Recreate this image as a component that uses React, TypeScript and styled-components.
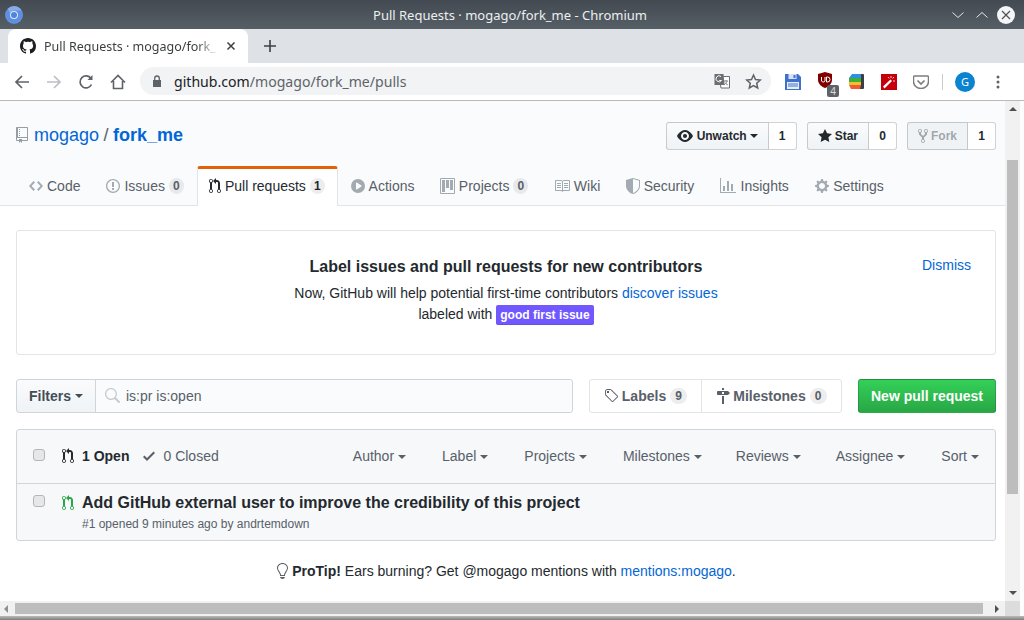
import React from "react";
import styled, { createGlobalStyle } from "styled-components";

const Global = createGlobalStyle`
  html, body { margin: 0; padding: 0; width: 1024px; height: 620px; overflow: hidden; background: #fff; }
  * { box-sizing: border-box; }
  #root { width: 1024px; height: 620px; }
`;

const GH = `"Liberation Sans", Arial, sans-serif`;
const UI = `"Noto Sans", "Open Sans", sans-serif`;

const Win = styled.div`display: flex; flex-direction: column; width: 1024px; height: 620px; font-family: ${GH}; color: #24292e; overflow: hidden;`;
const TitleBar = styled.div`
  height: 29px; flex: none; display: grid; grid-template-columns: 1fr auto 1fr; align-items: center;
  background: linear-gradient(#434a51, #565e66); color: #eceff1; font: 13px ${UI}; padding: 0 9px 0 5px;
`;
const WinTitle = styled.div``;
const LogoBox = styled.div`height: 18px;`;
const TitleRight = styled.div`display: flex; justify-content: flex-end; align-items: center; gap: 8px; svg:last-child { margin-left: -1px; }`;
const TabStrip = styled.div`height: 34px; flex: none; background: #dee1e6; display: flex; align-items: flex-end; padding-left: 8px;`;
const Tab = styled.div`
  width: 240px; height: 34px; background: #fff; border-radius: 8px 8px 0 0; display: flex; align-items: center; padding: 0 11px 0 12px; gap: 8px;
  font: 12.5px ${UI}; color: #3c4043;
`;
const TabTitle = styled.div`
  width: 174px; flex: none; white-space: nowrap;
  -webkit-mask-image: linear-gradient(90deg, #000 88%, transparent 100%); mask-image: linear-gradient(90deg, #000 88%, transparent 100%);
`;
const NewTab = styled.div`height: 34px; display: flex; align-items: center; margin-left: 16px;`;
const Toolbar = styled.div`height: 38px; flex: none; background: #fff; border-bottom: 1px solid #b9b9b9; display: flex; align-items: center; padding: 0 0 0 14px;`;
const NavBtn = styled.div<{ $w?: number }>`width: ${(p) => p.$w ?? 32}px; flex: none; display: flex; align-items: center; justify-content: flex-end;`;
const NavGroup = styled.div`display: flex; margin-right: 14px;`;
const Omni = styled.div`
  width: 631px; height: 28px; border-radius: 14px; background: #f1f3f4; display: flex; align-items: center; padding: 0 9px 0 12px;
  font: 14.1px ${UI}; color: #5f6368; margin-bottom: 1px; flex: none;
`;
const Url = styled.div`flex: 1; margin-left: 12px; white-space: nowrap; b { font-weight: 400; color: #202124; }`;
const OmniIcons = styled.div`display: flex; align-items: center; gap: 15px;`;
const Extensions = styled.div`display: flex; align-items: center; margin-left: 6px; height: 28px;`;
const Ext = styled.div`width: 32px; height: 28px; display: flex; align-items: center; justify-content: center; position: relative;`;
const StackExt = styled(Ext)`padding-right: 1px;`;
const Badge = styled.span`
  position: absolute; right: 2px; bottom: -1px; width: 12px; height: 12px; background: #5f6368; color: #ddd; border-radius: 2px;
  font: 10px/12px ${UI}; text-align: center;
`;
const Sep = styled.div`width: 1px; height: 16px; background: #c8cacd; margin: 0 6px 0 5px;`;
const Avatar = styled.div`width: 20px; height: 20px; border-radius: 50%; background: #0a84d0; color: #fff; font: 11px/20px ${UI}; text-align: center; margin: 0 21px 0 6px;`;

const Lower = styled.div`flex: 1; min-height: 0; display: flex; flex-direction: column; padding-right: 4px; background: #fdfdfd;`;
const Body = styled.div`flex: 1; min-height: 0; display: flex;`;
const Page = styled.div`flex: 1; min-width: 0; display: flex; flex-direction: column; background: #fff;`;
const VBar = styled.div`width: 15px; flex: none; background: #f1f1f1; display: flex; flex-direction: column; align-items: center;`;
const VThumb = styled.div`width: 11px; height: 334px; background: #bdbdbd; margin-top: 49px; flex: none;`;
const VArrow = styled.div<{ $down?: boolean }>`
  width: 0; height: 0; border-left: 4px solid transparent; border-right: 4px solid transparent; flex: none;
  ${(p) => (p.$down ? "border-top: 4px solid #505050; margin-top: 97px;" : "border-bottom: 4px solid #505050; margin-top: 6px;")}
`;
const HBarRow = styled.div`height: 15px; flex: none; background: #f1f1f1; display: flex; align-items: center;`;
const HThumb = styled.div`width: 968px; height: 11px; background: #bdbdbd; margin-left: 7px;`;
const HArrow = styled.div<{ $right?: boolean }>`
  width: 0; height: 0; border-top: 4px solid transparent; border-bottom: 4px solid transparent; margin-left: 4px;
  ${(p) => (p.$right ? "border-left: 4px solid #505050; margin-left: 12px;" : "border-right: 4px solid #909090;")}
`;
const Corner = styled.div`width: 15px; height: 15px; background: #dcdcdc; margin-left: auto;`;
const WinBottom = styled.div`height: 4px; flex: none; background: linear-gradient(#bbb, #7d7d7d);`;

const Head = styled.div`height: 105px; flex: none; background: #fafbfc; border-bottom: 1px solid #e1e4e8; display: flex; flex-direction: column; padding: 21px 9px 0 16px;`;
const HeadTop = styled.div`display: flex; justify-content: space-between; align-items: flex-start; height: 44px; flex: none;`;
const RepoTitle = styled.h1`margin: 0; font-size: 18px; font-weight: 400; line-height: 26px; display: flex; align-items: center; color: #586069; svg { margin-right: 6px; }`;
const Link = styled.a`color: #0366d6; text-decoration: none;`;
const StrongLink = styled(Link)`font-weight: 700;`;
const Slash = styled.span`margin: 0 4.5px;`;
const Actions = styled.div`display: flex; gap: 10px;`;
const BtnGroup = styled.div`display: flex; height: 28px; font-size: 12px; font-weight: 700;`;
const Caret = styled.span`display: inline-block; width: 0; height: 0; border-left: 4px solid transparent; border-right: 4px solid transparent; border-top: 4px solid currentColor; margin-left: 4px; vertical-align: middle;`;
const GBtn = styled.div<{ $off?: boolean }>`
  display: flex; align-items: center; gap: 3px; padding: 0 10px; border: 1px solid rgba(27,31,35,.2); border-radius: 3px 0 0 3px;
  background: linear-gradient(#fafbfc, #eff3f6); color: ${(p) => (p.$off ? "rgba(36,41,46,.4)" : "#24292e")};
  ${(p) => p.$off && "background: #eff3f6;"}
  ${Caret} { margin-left: 0; }
`;
const EyeLabel = styled.span`margin-left: 1px;`;
const Count = styled.div`
  display: flex; align-items: center; justify-content: center; width: 28px; border: 1px solid rgba(27,31,35,.2); border-left: 0; border-radius: 0 3px 3px 0; background: #fff; color: #24292e;
`;
const Tabs = styled.nav`display: flex; height: 40px; font-size: 14px; align-items: stretch; flex: none;`;
const TabItem = styled.div<{ $on?: boolean }>`
  display: flex; align-items: center; gap: 4px; padding: 0 13px; color: ${(p) => (p.$on ? "#24292e" : "#586069")}; white-space: nowrap; height: 40px;
  svg { fill: ${(p) => (p.$on ? "#24292e" : "#a3aab1")}; }
  ${(p) => p.$on && "background: #fff; border: 1px solid #e1e4e8; border-top: 3px solid #e36209; border-bottom: 0; border-radius: 3px 3px 0 0; padding: 0 12px 3px 11px;"}
`;
const LaterTab = styled(TabItem)`padding-left: 12.7px; padding-right: 12.7px;`;
const InsightsTab = styled(LaterTab)`gap: 5px;`;
const SettingsTab = styled(LaterTab)`margin-left: 1px;`;
const Counter = styled.span`
  display: inline-block; min-width: 17px; padding: 2px 5px; font-size: 12px; font-weight: 700; line-height: 1; color: #586069; background: rgba(27,31,35,.08); border-radius: 20px; text-align: center;
`;
const TabCounter = styled(Counter)`min-width: 15px; padding: 2px 4px;`;
const ActiveCounter = styled(TabCounter)`color: #24292e;`;

const Main = styled.div`flex: 1; padding: 24px 9px 0 16px; display: flex; flex-direction: column; min-height: 0;`;
const Notice = styled.div`height: 125px; flex: none; border: 1px solid #e1e4e8; border-radius: 3px; display: grid; grid-template-columns: 1fr auto 1fr; padding-top: 25px; text-align: center;`;
const NoticeBody = styled.div`font-size: 14px; line-height: 21px;`;
const NoticeTitle = styled.h3`margin: 0 0 5px; font-size: 16px; line-height: 22px; font-weight: 700; color: #24292e;`;
const Dismiss = styled(Link)`justify-self: end; font-size: 14px; line-height: 20px; margin-right: 24px; margin-top: -1px;`;
const GoodLabel = styled.span`display: inline-block; background: #7057ff; color: #fff; font-size: 12px; font-weight: 700; line-height: 20px; height: 20px; padding: 0 4px; border-radius: 2px; vertical-align: middle; box-shadow: inset 0 -1px 0 rgba(27,31,35,.12);`;
const FilterRow = styled.div`display: flex; margin-top: 24px; height: 34px; flex: none;`;
const FiltersBtn = styled.div`
  width: 80px; display: flex; align-items: center; justify-content: center; font-size: 14px; font-weight: 700; border: 1px solid #d1d5da; border-radius: 3px 0 0 3px;
  background: linear-gradient(#fafbfc, #eff3f6); color: #444d56;
`;
const SearchInput = styled.div`
  width: 478px; margin-left: -1px; display: flex; align-items: center; gap: 6px; padding-left: 8px; font-size: 14px; color: #586069; background: #fafbfc; border: 1px solid #d1d5da; border-radius: 0 3px 3px 0;
`;
const NavPair = styled.div`display: flex; margin-left: 16px; border: 1px solid #e1e4e8; border-radius: 3px; width: 253px;`;
const NavLink = styled.div<{ $w: number }>`
  width: ${(p) => p.$w}px; display: flex; align-items: center; justify-content: center; gap: 3px; font-size: 14px; font-weight: 700; color: #586069;
  & + & { border-left: 1px solid #e1e4e8; }
  svg { fill: #586069; }
  ${Counter} { margin-left: 1px; }
`;
const GreenBtn = styled.div`
  width: 138px; margin-left: 16px; display: flex; align-items: center; justify-content: center; color: #fff; font-size: 14px; font-weight: 700; border: 1px solid rgba(27,31,35,.2); border-radius: 3px;
  background: linear-gradient(#34d058, #28a745);
`;
const Table = styled.div`margin-top: 16px; height: 112px; flex: none; border: 1px solid #d1d5da; border-radius: 3px; background: #f6f8fa; display: flex; flex-direction: column;`;
const TableHead = styled.div`height: 54px; flex: none; border-bottom: 1px solid #d1d5da; display: flex; align-items: center; padding: 0 16px 2px; font-size: 14px; color: #586069;`;
const Check = styled.span`display: block; width: 12px; height: 12px; flex: none; background: #e6e7e8; border: 1px solid #b4b6b8; border-radius: 3px; margin-top: -2px;`;
const OpenLabel = styled.span`display: flex; align-items: center; font-weight: 700; color: #24292e; gap: 8px; margin-left: 17px;`;
const ClosedLabel = styled.span`display: flex; align-items: center; gap: 8px; margin-left: 14px; svg { fill: #586069; }`;
const Sorts = styled.div`margin-left: auto; display: flex; gap: 36px;`;
const SortItem = styled.span`
  white-space: nowrap;
  &:nth-child(4) { margin-right: -2px; }
  &:nth-child(5) { margin-right: -1px; }
`;
const Row = styled.div`display: flex; padding: 8px 16px 0;`;
const RowCheck = styled(Check)`margin-top: 3px;`;
const RowIcon = styled.div`margin-left: 17px; margin-right: 8px; margin-top: 3px; height: 16px;`;
const RowTitle = styled.div`font-size: 16px; font-weight: 700; line-height: 22px; color: #24292e;`;
const RowMeta = styled.div`font-size: 12px; line-height: 18px; color: #586069; margin-top: 1px;`;
const ProTip = styled.div`flex: none; margin-top: 20px; display: flex; justify-content: center; align-items: center; gap: 4px; font-size: 14px; line-height: 20px; color: #24292e; white-space: pre; svg { fill: #586069; }`;

const Oct = ({ w, d, fill }: { w: number; d: string; fill?: string }) => (
  <svg width={w} height={16} viewBox={`0 0 ${w} 16`} fill={fill} style={{ flex: "none" }}>
    <path fillRule="evenodd" d={d} />
  </svg>
);

const P = {
  repo: "M4 9H3V8h1v1zm0-3H3v1h1V6zm0-2H3v1h1V4zm0-2H3v1h1V2zm8-1v12c0 .55-.45 1-1 1H6v2l-1.5-1.5L3 16v-2H1c-.55 0-1-.45-1-1V1c0-.55.45-1 1-1h10c.55 0 1 .45 1 1zm-1 10H1v2h2v-1h3v1h5v-2zm0-10H2v9h9V1z",
  code: "M9.5 3L8 4.5 11.5 8 8 11.5 9.5 13 14 8 9.5 3zm-5 0L0 8l4.5 5L6 11.5 2.5 8 6 4.5 4.5 3z",
  issue: "M7 2.3c3.14 0 5.7 2.56 5.7 5.7s-2.56 5.7-5.7 5.7A5.71 5.71 0 0 1 1.3 8c0-3.14 2.56-5.7 5.7-5.7zM7 1C3.14 1 0 4.14 0 8s3.14 7 7 7 7-3.14 7-7-3.14-7-7-7zm1 3H6v5h2V4zm0 6H6v2h2v-2z",
  pr: "M11 11.28V5c-.03-.78-.34-1.47-.94-2.06C9.46 2.35 8.78 2.03 8 2H7V0L4 3l3 3V4h1c.27.02.48.11.69.31.21.2.3.42.31.69v6.28A1.993 1.993 0 0 0 10 15a1.993 1.993 0 0 0 1-3.72zm-1 2.92c-.66 0-1.2-.55-1.2-1.2 0-.65.55-1.2 1.2-1.2.65 0 1.2.55 1.2 1.2 0 .65-.55 1.2-1.2 1.2zM4 3c0-1.11-.89-2-2-2a1.993 1.993 0 0 0-1 3.72v6.56A1.993 1.993 0 0 0 2 15a1.993 1.993 0 0 0 1-3.72V4.72c.59-.34 1-.98 1-1.72zm-.8 10c0 .66-.55 1.2-1.2 1.2-.65 0-1.2-.55-1.2-1.2 0-.65.55-1.2 1.2-1.2.65 0 1.2.55 1.2 1.2zM2 4.2C1.34 4.2.8 3.65.8 3c0-.65.55-1.2 1.2-1.2.65 0 1.2.55 1.2 1.2 0 .65-.55 1.2-1.2 1.2z",
  play: "M14 8A7 7 0 1 1 0 8a7 7 0 0 1 14 0zm-8.223 3.482l4.599-3.066a.5.5 0 0 0 0-.832L5.777 4.518A.5.5 0 0 0 5 4.934v6.132a.5.5 0 0 0 .777.416z",
  project: "M10 12h3V2h-3v10zm-4-2h3V2H6v8zm-4 4h3V2H2v12zm-1 1h13V1H1v14zM14 0H1a1 1 0 0 0-1 1v14a1 1 0 0 0 1 1h13a1 1 0 0 0 1-1V1a1 1 0 0 0-1-1z",
  book: "M3 5h4v1H3V5zm0 3h4V7H3v1zm0 2h4V9H3v1zm11-5h-4v1h4V5zm0 2h-4v1h4V7zm0 2h-4v1h4V9zm2-6v9c0 .55-.45 1-1 1H9.5l-1 1-1-1H2c-.55 0-1-.45-1-1V3c0-.55.45-1 1-1h5.5l1 1 1-1H15c.55 0 1 .45 1 1zm-8 .5L7.5 3H2v9h6V3.5zm7-.5H9.5l-.5.5V12h6V3z",
  shield: "M7 0L0 2v6.02C0 12.69 5.31 16 7 16c1.69 0 7-3.31 7-7.98V2L7 0zm0 1.04l6 1.71v5.27c0 2.02-1.18 3.8-2.6 5.08C9.02 14.35 7.6 15 7 15V1.04z",
  graph: "M16 14v1H0V0h1v14h15zM5 13H3V8h2v5zm4 0H7V3h2v10zm4 0h-2V6h2v7z",
  gear: "M14 8.77v-1.6l-1.94-.64-.45-1.09.88-1.84-1.13-1.13-1.81.91-1.09-.45-.69-1.92h-1.6l-.63 1.94-1.11.45-1.84-.88-1.13 1.13.91 1.81-.45 1.09L0 7.23v1.59l1.94.64.45 1.09-.88 1.84 1.13 1.13 1.81-.91 1.09.45.69 1.92h1.59l.63-1.94 1.11-.45 1.84.88 1.13-1.13-.92-1.81.47-1.09L14 8.75v.02zM7 11c-1.66 0-3-1.34-3-3s1.34-3 3-3 3 1.34 3 3-1.34 3-3 3z",
  eye: "M8.06 2C3 2 0 8 0 8s3 6 8.06 6C13 14 16 8 16 8s-3-6-7.94-6zM8 12c-2.2 0-4-1.78-4-4 0-2.2 1.8-4 4-4 2.22 0 4 1.8 4 4 0 2.22-1.78 4-4 4zm2-4c0 1.11-.89 2-2 2-1.11 0-2-.89-2-2 0-1.11.89-2 2-2 1.11 0 2 .89 2 2z",
  star: "M14 6l-4.9-.64L7 1 4.9 5.36 0 6l3.6 3.26L2.67 14 7 11.67 11.33 14l-.93-4.74L14 6z",
  fork: "M8 1a1.993 1.993 0 0 0-1 3.72V6L5 8 3 6V4.72A1.993 1.993 0 0 0 2 1a1.993 1.993 0 0 0-1 3.72V6.5l3 3v1.78A1.993 1.993 0 0 0 5 15a1.993 1.993 0 0 0 1-3.72V9.5l3-3V4.72A1.993 1.993 0 0 0 8 1zM2 4.2C1.34 4.2.8 3.65.8 3c0-.65.55-1.2 1.2-1.2.65 0 1.2.55 1.2 1.2 0 .65-.55 1.2-1.2 1.2zm3 10c-.66 0-1.2-.55-1.2-1.2 0-.65.55-1.2 1.2-1.2.65 0 1.2.55 1.2 1.2 0 .65-.55 1.2-1.2 1.2zm3-10c-.66 0-1.2-.55-1.2-1.2 0-.65.55-1.2 1.2-1.2.65 0 1.2.55 1.2 1.2 0 .65-.55 1.2-1.2 1.2z",
  tag: "M7.73 1.73C7.26 1.26 6.62 1 5.96 1H3.5C2.13 1 1 2.13 1 3.5v2.47c0 .66.27 1.3.73 1.77l6.06 6.06c.39.39 1.02.39 1.41 0l4.59-4.59a.996.996 0 0 0 0-1.41L7.73 1.73zM2.38 7.09c-.31-.3-.47-.7-.47-1.13V3.5c0-.88.72-1.59 1.59-1.59h2.47c.42 0 .83.16 1.13.47l6.14 6.13-4.73 4.73-6.13-6.15zM3.01 3h2v2H3V3h.01z",
  milestone: "M8 2H6V0h2v2zm4 5H2c-.55 0-1-.45-1-1V4c0-.55.45-1 1-1h10l2 2-2 2zM8 4H6v2h2V4zM6 16h2V8H6v8z",
  search: "M15.7 13.3l-3.81-3.83A5.93 5.93 0 0 0 13 6c0-3.31-2.69-6-6-6S1 2.69 1 6s2.69 6 6 6c1.3 0 2.48-.41 3.47-1.11l3.83 3.81c.19.2.45.3.7.3.25 0 .52-.09.7-.3a.996.996 0 0 0 0-1.41v.01zM7 10.7c-2.59 0-4.7-2.11-4.7-4.7 0-2.59 2.11-4.7 4.7-4.7 2.59 0 4.7 2.11 4.7 4.7 0 2.59-2.11 4.7-4.7 4.7z",
  check: "M12 5l-8 8-4-4 1.5-1.5L4 10l6.5-6.5L12 5z",
  bulb: "M6.5 0C3.48 0 1 2.19 1 5c0 .92.55 2.25 1 3 1.34 2.25 1.78 2.78 2 4v1h5v-1c.22-1.22.66-1.75 2-4 .45-.75 1-2.08 1-3 0-2.81-2.48-5-5.5-5zm3.64 7.48c-.25.44-.47.8-.67 1.11-.86 1.41-1.25 2.06-1.45 3.23-.02.05-.02.11-.02.17H5c0-.06 0-.13-.02-.17-.2-1.17-.59-1.83-1.45-3.23-.2-.31-.42-.67-.67-1.11C2.44 6.78 2 5.65 2 5c0-2.2 2.02-4 4.5-4 1.22 0 2.36.42 3.22 1.19C10.55 2.94 11 3.94 11 5c0 .66-.44 1.78-.86 2.48zM4 14h5c-.23 1.14-1.3 2-2.5 2s-2.27-.86-2.5-2z",
  gh: "M8 0C3.58 0 0 3.58 0 8c0 3.54 2.29 6.53 5.47 7.59.4.07.55-.17.55-.38 0-.19-.01-.82-.01-1.49-2.01.37-2.53-.49-2.69-.94-.09-.23-.48-.94-.82-1.13-.28-.15-.68-.52-.01-.53.63-.01 1.08.58 1.23.82.72 1.21 1.87.87 2.33.66.07-.52.28-.87.51-1.07-1.78-.2-3.64-.89-3.64-3.95 0-.87.31-1.59.82-2.15-.08-.2-.36-1.02.08-2.12 0 0 .67-.21 2.2.82.64-.18 1.32-.27 2-.27.68 0 1.36.09 2 .27 1.53-1.04 2.2-.82 2.2-.82.44 1.1.16 1.92.08 2.12.51.56.82 1.27.82 2.15 0 3.07-1.87 3.75-3.65 3.95.29.25.54.73.54 1.48 0 1.07-.01 1.93-.01 2.2 0 .21.15.46.55.38A8.013 8.013 0 0 0 16 8c0-4.42-3.58-8-8-8z",
};

const ChromiumLogo = () => (
  <svg width="18" height="18" viewBox="0 0 18 18">
    <circle cx="9" cy="9" r="9" fill="#5f8fe0" />
    <path d="M9 0a9 9 0 0 1 7.8 4.5H9A4.5 4.5 0 0 0 5 7L2.7 2.6A9 9 0 0 1 9 0z" fill="#a9c4ef" opacity=".55" />
    <circle cx="9" cy="9" r="4" fill="#dfe8f7" />
    <circle cx="9" cy="9" r="3" fill="#4d84dd" />
  </svg>
);

const App = () => (
  <Win>
    <Global />
    <TitleBar>
      <LogoBox><ChromiumLogo /></LogoBox>
      <WinTitle>Pull Requests · mogago/fork_me - Chromium</WinTitle>
      <TitleRight>
        <svg width="16" height="16" viewBox="0 0 16 16" fill="none" stroke="#e6e8ea" strokeWidth="1"><path d="M2.5 5.5L8 10.5l5.5-5" /></svg>
        <svg width="16" height="16" viewBox="0 0 16 16" fill="none" stroke="#e6e8ea" strokeWidth="1"><path d="M2.5 10.5L8 5.5l5.5 5" /></svg>
        <svg width="18" height="18" viewBox="0 0 18 18"><circle cx="9" cy="9" r="9" fill="#f4f5f6" /><path d="M5 5l8 8M13 5l-8 8" stroke="#4c5359" strokeWidth="1.2" /></svg>
      </TitleRight>
    </TitleBar>
    <TabStrip>
      <Tab>
        <Oct w={16} d={P.gh} fill="#1b1f23" />
        <TabTitle>Pull Requests · mogago/fork_</TabTitle>
        <svg width="10" height="10" viewBox="0 0 10 10" stroke="#3c4043" strokeWidth="1.5"><path d="M1.5 1.5l7 7M8.5 1.5l-7 7" /></svg>
      </Tab>
      <NewTab>
        <svg width="12" height="12" viewBox="0 0 12 12" stroke="#3c4043" strokeWidth="1.6"><path d="M6 0v12M0 6h12" /></svg>
      </NewTab>
    </TabStrip>
    <Toolbar>
      <NavGroup>
        <NavBtn $w={16}>
          <svg width="16" height="16" viewBox="0 0 16 16" fill="none" stroke="#5f6368" strokeWidth="1.7"><path d="M15 8H2M8 2L2 8l6 6" /></svg>
        </NavBtn>
        <NavBtn>
          <svg width="16" height="16" viewBox="0 0 16 16" fill="none" stroke="#bcbfc3" strokeWidth="1.7"><path d="M1 8h13M8 2l6 6-6 6" /></svg>
        </NavBtn>
        <NavBtn>
          <svg width="16" height="16" viewBox="0 0 16 16" fill="none" stroke="#5f6368" strokeWidth="1.7"><path d="M13.5 10.5A6 6 0 1 1 13 4.5" /><path d="M14.5 1v5h-5z" fill="#5f6368" stroke="none" /></svg>
        </NavBtn>
        <NavBtn>
          <svg width="16" height="16" viewBox="0 0 16 16" fill="none" stroke="#5f6368" strokeWidth="1.6"><path d="M1 8.5L8 1.5l7 7M3.5 7v7.5h9V7" /></svg>
        </NavBtn>
      </NavGroup>
      <Omni>
        <svg width="10" height="12" viewBox="0 0 10 12" fill="#5f6368" style={{ flex: "none" }}><path d="M1 5h8v7H1z" /><path d="M2.7 5V3.3a2.3 2.3 0 0 1 4.6 0V5" fill="none" stroke="#5f6368" strokeWidth="1.3" /></svg>
        <Url><b>github.com</b>/mogago/fork_me/pulls</Url>
        <OmniIcons>
          <svg width="16" height="16" viewBox="0 0 16 16"><path d="M5 3.5h10.5V15H7z" fill="#fff" stroke="#6b6e72" /><path d="M.5 1h9l1 11h-10z" fill="#6b6e72" /><path d="M7 3.5a3 3 0 1 0 .5 4H5.2" fill="none" stroke="#fff" strokeWidth="1" /><path d="M10 8h4M12 7v1M13 8c-.5 2-1.5 3-3 4M11 9.5c.5 1 1.5 2 3 2.5" fill="none" stroke="#6b6e72" strokeWidth=".8" /></svg>
          <svg width="17" height="17" viewBox="0 0 17 17" fill="none" stroke="#5f6368" strokeWidth="1.5"><path d="M8.5 2l2 4.5 4.8.5-3.6 3.2 1 4.8-4.2-2.5L4.3 15l1-4.8L1.7 7l4.8-.5z" /></svg>
        </OmniIcons>
      </Omni>
      <Extensions>
        <Ext>
          <svg width="16" height="16" viewBox="0 0 16 16"><path d="M0 0h13l3 3v13H0z" fill="#3f70ce" /><path d="M3.5 0h8v5h-8z" fill="#d8e2f5" /><path d="M8.5 1h2v3h-2z" fill="#3f70ce" /><path d="M2 8h12v7H2z" fill="#e8edf7" /><path d="M3 10h10M3 12h10" stroke="#3f70ce" /></svg>
        </Ext>
        <Ext>
          <svg width="14" height="16" viewBox="0 0 14 16" style={{ marginTop: -3 }}><path d="M7 0l7 2v6c0 4-4 7-7 8-3-1-7-4-7-8V2z" fill="#800000" /><path d="M3.5 5v4a2 2 0 0 0 3.5 0V5M8.5 5v5M8.5 5h1a2.5 2.5 0 0 1 0 5h-1" fill="none" stroke="#fff" strokeWidth="1" /></svg>
          <Badge>4</Badge>
        </Ext>
        <StackExt>
          <svg width="15" height="15" viewBox="0 0 15 15"><rect x="10" y="0" width="5" height="15" rx="1" fill="#3b3f45" /><path d="M3 0h9v4H0z" fill="#2f8fe0" /><path d="M0 4h12v4H0z" fill="#3cae3c" /><path d="M0 8h12v3H0z" fill="#f2c02c" /><path d="M0 11h12l-1 4H2z" fill="#ef5b34" /></svg>
        </StackExt>
        <Ext>
          <svg width="16" height="16" viewBox="0 0 16 16"><path d="M0 0h16v16H0z" fill="#c4000b" /><path d="M2 12.5L9.5 5.5l1.5 1.5-7.5 7.500z" fill="#fff" /><path d="M10 2v2M13 3l-1.5 1.5M14 7h-2M7 3l1.3 1.5" stroke="#f6c8c8" /></svg>
        </Ext>
        <Ext>
          <svg width="16" height="14" viewBox="0 0 16 14"><path d="M1.5 1h13a1 1 0 0 1 1 1v4.5C15.5 10.5 12 13.5 8 13.5S.5 10.5.5 6.5V2a1 1 0 0 1 1-1z" fill="#fff" stroke="#7d7d7d" strokeWidth="1.5" /><path d="M4.5 5.5L8 9l3.5-3.5" fill="none" stroke="#7d7d7d" strokeWidth="1.7" /></svg>
        </Ext>
        <Sep />
        <Avatar>G</Avatar>
        <svg width="4" height="14" viewBox="0 0 4 14" fill="#5f6368"><circle cx="2" cy="2" r="1.5" /><circle cx="2" cy="7" r="1.5" /><circle cx="2" cy="12" r="1.5" /></svg>
      </Extensions>
    </Toolbar>
    <Lower>
      <Body>
        <Page>
          <Head>
            <HeadTop>
              <RepoTitle>
                <Oct w={12} d={P.repo} fill="#959da5" />
                <Link>mogago</Link><Slash>/</Slash><StrongLink>fork_me</StrongLink>
              </RepoTitle>
              <Actions>
                <BtnGroup>
                  <GBtn><Oct w={16} d={P.eye} fill="#24292e" /><EyeLabel>Unwatch</EyeLabel><Caret /></GBtn>
                  <Count>1</Count>
                </BtnGroup>
                <BtnGroup>
                  <GBtn><Oct w={14} d={P.star} fill="#24292e" /><span>Star</span></GBtn>
                  <Count>0</Count>
                </BtnGroup>
                <BtnGroup>
                  <GBtn $off><Oct w={10} d={P.fork} fill="#a3a6a9" /><span>Fork</span></GBtn>
                  <Count>1</Count>
                </BtnGroup>
              </Actions>
            </HeadTop>
            <Tabs>
              <TabItem><Oct w={14} d={P.code} />Code</TabItem>
              <TabItem><Oct w={14} d={P.issue} />Issues<TabCounter>0</TabCounter></TabItem>
              <TabItem $on><Oct w={12} d={P.pr} />Pull requests<ActiveCounter>1</ActiveCounter></TabItem>
              <LaterTab><Oct w={14} d={P.play} />Actions</LaterTab>
              <LaterTab><Oct w={15} d={P.project} />Projects<TabCounter>0</TabCounter></LaterTab>
              <LaterTab><Oct w={16} d={P.book} />Wiki</LaterTab>
              <LaterTab><Oct w={14} d={P.shield} />Security</LaterTab>
              <InsightsTab><Oct w={16} d={P.graph} />Insights</InsightsTab>
              <SettingsTab><Oct w={14} d={P.gear} />Settings</SettingsTab>
            </Tabs>
          </Head>
          <Main>
            <Notice>
              <span />
              <NoticeBody>
                <NoticeTitle>Label issues and pull requests for new contributors</NoticeTitle>
                Now, GitHub will help potential first-time contributors <Link>discover issues</Link>
                <br />
                labeled with <GoodLabel>good first issue</GoodLabel>
              </NoticeBody>
              <Dismiss>Dismiss</Dismiss>
            </Notice>
            <FilterRow>
              <FiltersBtn>Filters<Caret /></FiltersBtn>
              <SearchInput><Oct w={16} d={P.search} fill="#c6cbd1" />is:pr is:open</SearchInput>
              <NavPair>
                <NavLink $w={111}><Oct w={15} d={P.tag} />Labels<Counter>9</Counter></NavLink>
                <NavLink $w={140}><Oct w={14} d={P.milestone} />Milestones<Counter>0</Counter></NavLink>
              </NavPair>
              <GreenBtn>New pull request</GreenBtn>
            </FilterRow>
            <Table>
              <TableHead>
                <Check />
                <OpenLabel><Oct w={12} d={P.pr} fill="#24292e" />1 Open</OpenLabel>
                <ClosedLabel><Oct w={12} d={P.check} />0 Closed</ClosedLabel>
                <Sorts>
                  {["Author", "Label", "Projects", "Milestones", "Reviews", "Assignee", "Sort"].map((s) => (
                    <SortItem key={s}>{s}<Caret /></SortItem>
                  ))}
                </Sorts>
              </TableHead>
              <Row>
                <RowCheck />
                <RowIcon><Oct w={12} d={P.pr} fill="#28a745" /></RowIcon>
                <div>
                  <RowTitle>Add GitHub external user to improve the credibility of this project</RowTitle>
                  <RowMeta>#1 opened 9 minutes ago by andrtemdown</RowMeta>
                </div>
              </Row>
            </Table>
            <ProTip>
              <Oct w={12} d={P.bulb} />
              <span><b>ProTip!</b> Ears burning? Get @mogago mentions with <Link>mentions:mogago</Link>.</span>
            </ProTip>
          </Main>
        </Page>
        <VBar>
          <VArrow />
          <VThumb />
          <VArrow $down />
        </VBar>
      </Body>
      <HBarRow>
        <HArrow />
        <HThumb />
        <HArrow $right />
        <Corner />
      </HBarRow>
    </Lower>
    <WinBottom />
  </Win>
);

export default App;
